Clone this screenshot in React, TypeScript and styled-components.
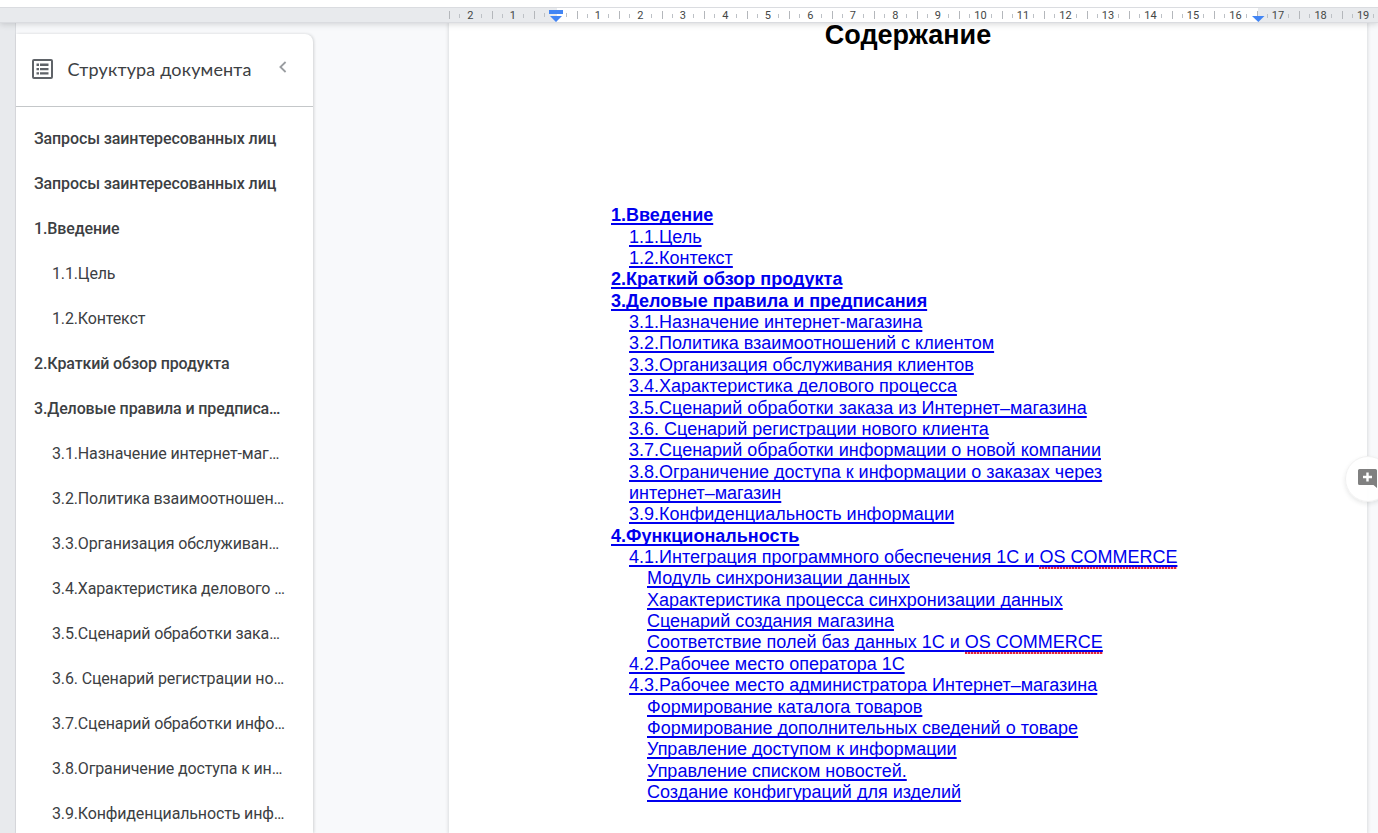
import React from 'react';
import styled, { createGlobalStyle } from 'styled-components';

const GlobalStyle = createGlobalStyle`
  *, *::before, *::after { box-sizing: border-box; }
  html, body { margin: 0; padding: 0; overflow: hidden; }
  body { background: #f8f9fb; }
`;

const Screen = styled.div`
  width: 1378px;
  height: 833px;
  display: flex;
  flex-direction: column;
  overflow: hidden;
  background: #f8f9fb;
  font-family: Roboto, "Liberation Sans", sans-serif;
`;

const Ruler = styled.div`
  position: relative;
  z-index: 2;
  flex: none;
  height: 23px;
  padding-top: 7px;
  background: #fff;
  box-shadow: 0 1px 6px rgba(60, 64, 67, 0.22);
`;

const RulerTrack = styled.div`
  height: 16px;
  border-top: 1px solid #dadce0;
  border-bottom: 1px solid #dadce0;
  padding-left: 449px;
  display: flex;
  overflow: hidden;
  background: linear-gradient(90deg, #e8eaed 557px, #fff 557px, #fff 1258px, #e8eaed 1258px);
`;

const RulerUnit = styled.div`
  flex: none;
  width: 42.53px;
  height: 14px;
  display: grid;
  grid-template-columns: 11px 1fr 11px;
  align-items: center;
  justify-items: end;
  background: linear-gradient(#b4b7bb, #b4b7bb) 0 3px / 1px 8px no-repeat;
`;

const Tick = styled.i`
  width: 1px;
  height: 4px;
  background: #bdc1c6;
  &:last-child { justify-self: start; }
`;

const RulerNumber = styled.span`
  justify-self: center;
  padding-top: 1px;
  font-size: 11px;
  line-height: 14px;
  color: #444746;
`;

const Marker = styled.svg<{ $x: number }>`
  position: absolute;
  top: 10px;
  left: ${(p) => p.$x}px;
`;

const Workspace = styled.div`
  flex: 1;
  min-height: 0;
  display: flex;
`;

const VerticalRuler = styled.div`
  flex: none;
  width: 16px;
  background: #e8eaed;
  border-right: 1px solid #dadce0;
`;

const Outline = styled.aside`
  flex: none;
  width: 297px;
  margin-top: 11px;
  background: #fff;
  border-top-right-radius: 8px;
  box-shadow: 1px 0 3px rgba(60, 64, 67, 0.2);
  overflow: hidden;
`;

const OutlineHeader = styled.header`
  height: 73px;
  display: flex;
  align-items: center;
  padding: 0 24px 2px 16px;
  border-bottom: 1px solid #c4c7c9;
`;

const OutlineTitle = styled.h2`
  flex: 1;
  margin: 0 0 0 14.5px;
  font: 400 18px/24px Lato, sans-serif;
  letter-spacing: 0.15px;
  color: #3c4043;
  white-space: nowrap;
`;

const Collapse = styled.svg`
  flex: none;
  margin-bottom: 4px;
`;

const OutlineList = styled.nav`
  padding-top: 9px;
`;

const OutlineItem = styled.div<{ $sub?: boolean }>`
  height: 45px;
  line-height: 46px;
  margin-left: ${(p) => (p.$sub ? 36 : 18)}px;
  font-size: 16px;
  font-weight: ${(p) => (p.$sub ? 400 : 500)};
  letter-spacing: ${(p) => (p.$sub ? -0.15 : -0.12)}px;
  color: #3c4043;
  white-space: nowrap;
`;

const Page = styled.main`
  flex: none;
  width: 918px;
  margin-left: 136px;
  background: #fff;
  box-shadow: 0 0 3px 1px rgba(60, 64, 67, 0.15);
  color: #000;
  font-family: "Liberation Sans", Arial, sans-serif;
`;

const PageTitle = styled.h1`
  margin: -4px 0 0;
  font-size: 27px;
  line-height: 32px;
  text-align: center;
`;

const Contents = styled.div`
  margin: 154.3px 0 0 162px;
`;

const Entry = styled.div<{ $level: number }>`
  height: 21.37px;
  line-height: 21.37px;
  padding-left: ${(p) => p.$level * 18}px;
  font-size: 18px;
  font-weight: ${(p) => (p.$level === 0 ? 700 : 400)};
  color: #0000ee;
  white-space: nowrap;
`;

const Link = styled.a`
  color: inherit;
  text-decoration: underline;
  text-decoration-thickness: 2px;
  text-decoration-skip-ink: none;
  text-underline-offset: 2px;
`;

const Misspelled = styled.span`
  background: repeating-linear-gradient(90deg, #e0243a 0 2px, #f6b3bb 2px 3px) left bottom / 100% 2px no-repeat;
  padding-bottom: 2px;
`;

const AddComment = styled.button`
  position: absolute;
  left: 1345px;
  top: 456px;
  width: 46px;
  height: 46px;
  padding: 0 0 2px 12px;
  border: 1px solid #f1f1f1;
  border-radius: 50%;
  background: rgba(255, 255, 255, 0.92);
  box-shadow: 0 2px 4px rgba(60, 64, 67, 0.12);
  display: flex;
  align-items: center;
`;

const outline: [string, boolean][] = [
  ['Запросы заинтересованных лиц', false],
  ['Запросы заинтересованных лиц', false],
  ['1.Введение', false],
  ['1.1.Цель', true],
  ['1.2.Контекст', true],
  ['2.Краткий обзор продукта', false],
  ['3.Деловые правила и предписа…', false],
  ['3.1.Назначение интернет-маг…', true],
  ['3.2.Политика взаимоотношен…', true],
  ['3.3.Организация обслуживан…', true],
  ['3.4.Характеристика делового …', true],
  ['3.5.Сценарий обработки зака…', true],
  ['3.6. Сценарий регистрации но…', true],
  ['3.7.Сценарий обработки инфо…', true],
  ['3.8.Ограничение доступа к ин…', true],
  ['3.9.Конфиденциальность инф…', true],
];

const contents: [number, string, string?][] = [
  [0, '1.Введение'],
  [1, '1.1.Цель'],
  [1, '1.2.Контекст'],
  [0, '2.Краткий обзор продукта'],
  [0, '3.Деловые правила и предписания'],
  [1, '3.1.Назначение интернет-магазина'],
  [1, '3.2.Политика взаимоотношений с клиентом'],
  [1, '3.3.Организация обслуживания клиентов'],
  [1, '3.4.Характеристика делового процесса'],
  [1, '3.5.Сценарий обработки заказа из Интернет–магазина'],
  [1, '3.6. Сценарий регистрации нового клиента'],
  [1, '3.7.Сценарий обработки информации о новой компании'],
  [1, '3.8.Ограничение доступа к информации о заказах через'],
  [1, 'интернет–магазин'],
  [1, '3.9.Конфиденциальность информации'],
  [0, '4.Функциональность'],
  [1, '4.1.Интеграция программного обеспечения 1С и ', 'OS COMMERCE'],
  [2, 'Модуль синхронизации данных'],
  [2, 'Характеристика процесса синхронизации данных'],
  [2, 'Сценарий создания магазина'],
  [2, 'Соответствие полей баз данных 1С и ', 'OS COMMERCE'],
  [1, '4.2.Рабочее место оператора 1С'],
  [1, '4.3.Рабочее место администратора Интернет–магазина'],
  [2, 'Формирование каталога товаров'],
  [2, 'Формирование дополнительных сведений о товаре'],
  [2, 'Управление доступом к информации'],
  [2, 'Управление списком новостей.'],
  [2, 'Создание конфигураций для изделий'],
];

const units = Array.from({ length: 22 }, (_, i) => i - 2);

export default function App() {
  return (
    <Screen>
      <GlobalStyle />
      <Ruler>
        <RulerTrack>
          {units.map((n) => (
            <RulerUnit key={n}>
              <Tick />
              <RulerNumber>{n === 0 ? '' : Math.abs(n)}</RulerNumber>
              <Tick />
            </RulerUnit>
          ))}
        </RulerTrack>
        <Marker $x={549} width="14" height="12" viewBox="0 0 14 12" fill="#4285f4">
          <path d="M0 0h14v4H0zM1 6h12l-6 6z" />
        </Marker>
        <Marker $x={1252} width="13" height="12" viewBox="0 0 13 12" fill="#4285f4">
          <path d="M0 6h12.5l-6.2 6z" />
        </Marker>
      </Ruler>
      <Workspace>
        <VerticalRuler />
        <Outline>
          <OutlineHeader>
            <svg width="21" height="20" viewBox="0 0 21 20" fill="#5f6368">
              <path
                fillRule="evenodd"
                d="M2 0h17a2 2 0 0 1 2 2v16a2 2 0 0 1-2 2H2a2 2 0 0 1-2-2V2a2 2 0 0 1 2-2zm0 2v16h17V2zM4.500 4.500h2.500v2.500H4.500zM8 4.500h8.500v2.500H8zM4.500 9h2.500v2.300H4.500zM8 9h8.500v2.300H8zM4.500 13.300h2.500v2.300H4.500zM8 13.300h8.500v2.300H8z"
              />
            </svg>
            <OutlineTitle>Структура документа</OutlineTitle>
            <Collapse width="12" height="12" viewBox="0 0 12 12" fill="none" stroke="#9a9da1" strokeWidth="1.8">
              <path d="M8.600 1 3.400 6l5.200 5" />
            </Collapse>
          </OutlineHeader>
          <OutlineList>
            {outline.map(([text, sub], i) => (
              <OutlineItem key={i} $sub={sub}>{text}</OutlineItem>
            ))}
          </OutlineList>
        </Outline>
        <Page>
          <PageTitle>Содержание</PageTitle>
          <Contents>
            {contents.map(([level, text, flagged]) => (
              <Entry key={text} $level={level}>
                <Link>
                  {text}
                  {flagged && <Misspelled>{flagged}</Misspelled>}
                </Link>
              </Entry>
            ))}
          </Contents>
        </Page>
      </Workspace>
      <AddComment aria-label="Добавить комментарий">
        <svg width="19" height="19" viewBox="0 0 19 19" fill="#808080">
          <path fillRule="evenodd" d="M1.500 0h16A1.500 1.500 0 0 1 19 1.500V19l-3.500-3H1.500A1.500 1.500 0 0 1 0 14.500v-13A1.500 1.500 0 0 1 1.500 0zM8.300 3.500v3.300H5v2.400h3.300v3.300h2.400V9.200H14V6.800h-3.300V3.500z" />
        </svg>
      </AddComment>
    </Screen>
  );
}
